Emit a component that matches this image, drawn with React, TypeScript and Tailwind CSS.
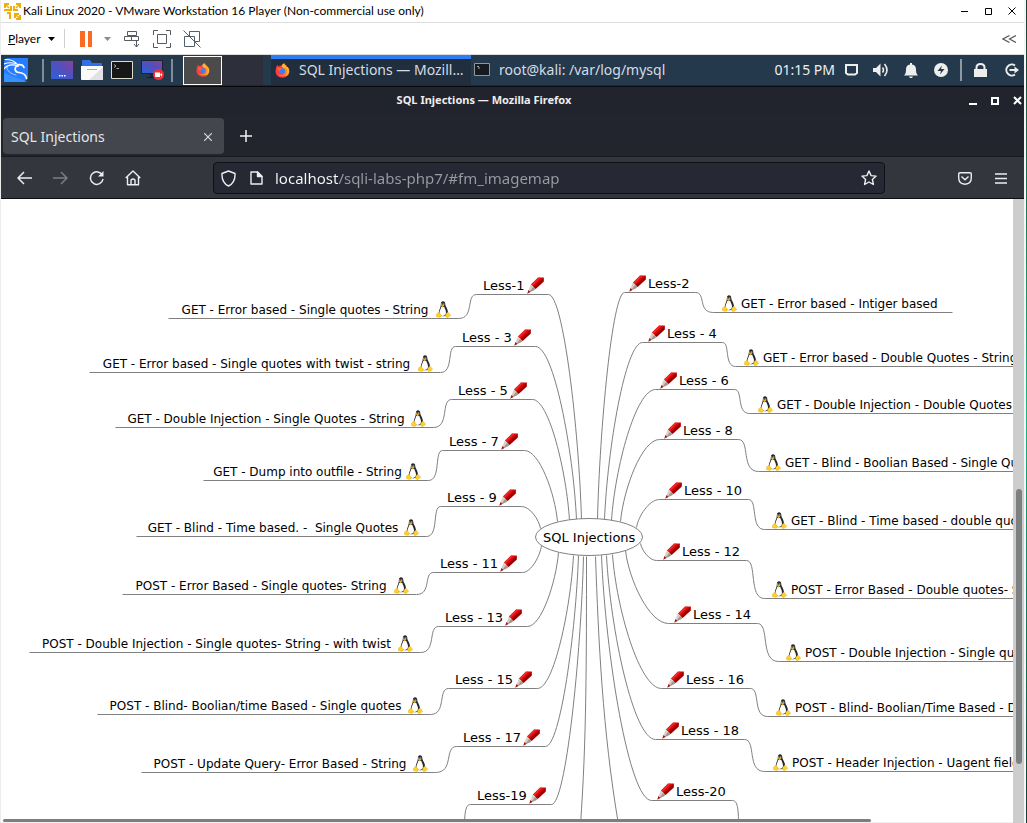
import React from "react";

type Side = "left" | "right";

interface Lesson {
  side: Side;
  label: string;
  x: number; // left edge of the label row
  y: number; // underline
  from: number; // underline start
  to: number; // underline end
  root: [number, number]; // where the branch meets the centre bubble
  topic?: { text: string; x: number; y: number; from: number; to: number };
}

const VIEW = { x: 1, y: 199 };

const lessons: Lesson[] = [
  { side: "left", label: "Less-1", x: 483, y: 294, from: 476, to: 548, root: [581, 519], topic: { text: "GET - Error based - Single quotes - String", x: 174, y: 318, from: 168, to: 458 } },
  { side: "left", label: "Less - 3", x: 462, y: 346, from: 455, to: 535, root: [576, 519], topic: { text: "GET - Error based - Single quotes with twist - string", x: 95, y: 372, from: 89, to: 440 } },
  { side: "left", label: "Less - 5", x: 458, y: 399, from: 451, to: 532, root: [569, 520], topic: { text: "GET - Double Injection - Single Quotes - String", x: 121, y: 427, from: 115, to: 433 } },
  { side: "left", label: "Less - 7", x: 449, y: 450, from: 442, to: 524, root: [557, 521], topic: { text: "GET - Dump into outfile - String", x: 209, y: 480, from: 203, to: 428 } },
  { side: "left", label: "Less - 9", x: 447, y: 506, from: 440, to: 521, root: [540, 528], topic: { text: "GET - Blind - Time based. -  Single Quotes", x: 142, y: 536, from: 136, to: 426 } },
  { side: "left", label: "Less - 11", x: 440, y: 572, from: 433, to: 522, root: [541, 545], topic: { text: "POST - Error Based - Single quotes- String", x: 128, y: 594, from: 122, to: 416 } },
  { side: "left", label: "Less - 13", x: 445, y: 626, from: 438, to: 527, root: [558, 552], topic: { text: "POST - Double Injection - Single quotes- String - with twist", x: 35, y: 652, from: 29, to: 420 } },
  { side: "left", label: "Less - 15", x: 455, y: 688, from: 448, to: 537, root: [573, 555], topic: { text: "POST - Blind- Boolian/time Based - Single quotes", x: 103, y: 714, from: 97, to: 430 } },
  { side: "left", label: "Less - 17", x: 463, y: 746, from: 456, to: 545, root: [578, 555], topic: { text: "POST - Update Query- Error Based - String", x: 147, y: 772, from: 141, to: 435 } },
  { side: "left", label: "Less-19", x: 477, y: 804, from: 470, to: 551, root: [583, 556] },
  { side: "right", label: "Less-2", x: 629, y: 292, from: 624, to: 695, root: [597, 519], topic: { text: "GET - Error based - Intiger based", x: 722, y: 312, from: 713, to: 952 } },
  { side: "right", label: "Less - 4", x: 648, y: 342, from: 642, to: 722, root: [604, 519], topic: { text: "GET - Error based - Double Quotes - String", x: 744, y: 366, from: 735, to: 1100 } },
  { side: "right", label: "Less - 6", x: 660, y: 389, from: 655, to: 734, root: [611, 520], topic: { text: "GET - Double Injection - Double Quotes - String", x: 758, y: 413, from: 749, to: 1100 } },
  { side: "right", label: "Less - 8", x: 664, y: 439, from: 659, to: 738, root: [620, 521], topic: { text: "GET - Blind - Boolian Based - Single Quotes", x: 766, y: 471, from: 758, to: 1100 } },
  { side: "right", label: "Less - 10", x: 665, y: 499, from: 659, to: 748, root: [636, 527], topic: { text: "GET - Blind - Time based - double quotes", x: 772, y: 529, from: 764, to: 1100 } },
  { side: "right", label: "Less - 12", x: 663, y: 560, from: 656, to: 746, root: [640, 543], topic: { text: "POST - Error Based - Double quotes- String", x: 772, y: 598, from: 764, to: 1100 } },
  { side: "right", label: "Less - 14", x: 674, y: 623, from: 668, to: 757, root: [625, 550], topic: { text: "POST - Double Injection - Single quotes", x: 786, y: 661, from: 778, to: 1100 } },
  { side: "right", label: "Less - 16", x: 667, y: 688, from: 661, to: 750, root: [612, 554], topic: { text: "POST - Blind- Boolian/Time Based - Double quotes", x: 776, y: 716, from: 767, to: 1100 } },
  { side: "right", label: "Less - 18", x: 662, y: 739, from: 655, to: 744, root: [606, 555], topic: { text: "POST - Header Injection - Uagent field", x: 773, y: 771, from: 764, to: 1100 } },
  { side: "right", label: "Less-20", x: 657, y: 800, from: 651, to: 732, root: [601, 555] },
];

function branchPath(l: Lesson) {
  const nx = l.side === "left" ? l.to : l.from;
  const [rx, ry] = l.root;
  const dx = rx - nx;
  const dy = l.y - ry;
  return `M${nx} ${l.y}C${nx + 0.45 * dx} ${l.y} ${rx - 0.08 * dx} ${ry + 0.4 * dy} ${rx} ${ry}`;
}

function linkPath(l: Lesson) {
  const x0 = l.side === "left" ? l.from : l.to;
  if (!l.topic) {
    const s = l.side === "left" ? -1 : 1;
    return `M${x0} ${l.y}C${x0 + 5 * s} ${l.y} ${x0 + 6 * s} ${l.y + 8} ${x0 + 6 * s} ${l.y + 24}`;
  }
  const x1 = l.side === "left" ? l.topic.to : l.topic.from;
  const dx = x1 - x0;
  return `M${x0} ${l.y}C${x0 + 0.6 * dx} ${l.y} ${x0 + 0.1 * dx} ${l.topic.y} ${x1} ${l.topic.y}`;
}

function Pencil() {
  return (
    <svg width="17" height="17" viewBox="0 0 17 17" className="shrink-0">
      <path d="M11 .4h5.600v4.200L8.500 12 3.900 7.600z" fill="#dc0808" />
      <path d="M16.600.6v4L8.500 12 6.600 10.200z" fill="#9d0000" />
      <path d="M11 .8h2.500L5.800 8.400 4.700 7.400z" fill="#f42a2a" />
      <path d="M3.900 7.600 8.500 12 7 13.200l-5.600 2.500-.4-1L3.200 9z" fill="#d8cec6" />
      <path d="M6 10 8.500 12 7 13.200l-5 2.300z" fill="#a3968d" />
      <path d="M1.500 13 3.400 15 .2 16.800z" fill="#a01010" />
    </svg>
  );
}

function Penguin() {
  return (
    <svg width="15" height="17" viewBox="0 0 15 17" className="shrink-0">
      <path d="M4.900 3C4.900 1.200 5.700.2 7 .2c1.500 0 2.300 1.100 2.300 3C9.300 5.500 12 7.500 12 11.500c0 2.500-2 3.700-4.800 3.700S2.700 14 2.700 12C2.700 9 4.900 6.500 4.900 3z" fill="#24272c" />
      <path d="M5.300 6h3c.6 2 1.700 3.300 1.700 5.600 0 2.300-1.200 3.300-3.200 3.300s-3.400-1-3.400-2.900c0-2.300 1.400-3.700 1.900-6z" fill="#fff" />
      <path d="M5.300 2.600h1v1.200h-1zM7.200 2.600h1.100v1.200H7.200z" fill="#e4e4e4" />
      <path d="M4.900 4.500 6.500 3.500l2 1L6.500 6.400z" fill="#e9ab1c" />
      <path d="M2.600 11.300c1 0 1.300 1.300 2.200 2.300.8.900.6 2.500-.7 2.700-1.400.2-2.500-.6-3.600-.8-.6-.3.200-1.300 0-2.200.1-.8 1.500-.6 2.100-2z" fill="#fdd02a" stroke="#dba512" strokeWidth=".4" />
      <path d="M11.800 11.300c.8 0 1 1.100 1.700 1.700.8.600 1.400 1.100 1 1.600-1.100.7-2 1.800-3.300 1.900-1.400 0-1.800-1.200-1.600-2.300.3-1.300.9-2.400 2.200-2.900z" fill="#fdd02a" stroke="#dba512" strokeWidth=".4" />
    </svg>
  );
}

function FirefoxLogo({ size }: { size: number }) {
  return (
    <svg width={size} height={size} viewBox="0 0 16 16" className="shrink-0">
      <path d="M1.700 3.400 2.600 2l1.500 1.600C5 2.900 6 2.700 7 2.900 7.400 1.700 8.700.7 10.100.3c-.1 1.500 1.200 1.900 2.200 2.900l.1 1.200.8-.3c1.300 1.300 2.100 3 2.100 5 0 3.700-3.200 6.500-7.200 6.500S.6 12.700.6 9c0-2.300.5-3.700 1.100-5.600z" fill="#ff3b45" />
      <path d="M10.100.3c-.1 1.500 1.200 1.900 2.200 2.900l.1 1.200.8-.3c1.300 1.300 2 3 1.900 5-.2 3-2.300 4.900-5 5.400 3-1.800 3-6.500-.2-8.500C8.300 4.900 7 3.800 7.100 2.900 7.500 1.700 8.700.7 10.100.3z" fill="#ffb52b" />
      <path d="M11.700 5.300c2 2.400 1.600 6.200-.9 8-2.600 1.500-5.800.8-7.500-1.600 1.800 1.400 5 1.600 6.600-.2 1.400-1.600 1.200-4.200.1-5.400z" fill="#ff8a1f" />
      <circle cx="7.800" cy="8.600" r="3" fill="#3f7df5" />
      <path d="M2.400 5.300c1.700-.7 3.500-.3 5.300.5L6.500 7.200c-1.100.1-1.700.8-1.400 1.900-1.200-.8-2.300-2.200-2.700-3.800z" fill="#ff6a2b" />
    </svg>
  );
}

function VmwareLogo() {
  return (
    <svg width="17" height="17" viewBox="0 0 17 17" fill="none" stroke="#f0ae0c" strokeWidth="2">
      <path d="M1 5V1h4M12 1h4v4M16 12v4h-4M6 16v-5" />
      <path d="M0 7h7V3M10 3v4h4M11 15v-4h4M3 10h4" />
      <path d="m1 1 4 4M16 1l-4 4M16 16l-4-4" strokeWidth="1.600" />
    </svg>
  );
}

function WindowFrame() {
  return (
    <header className="flex h-[23px] shrink-0 items-center border-b border-[#dedede] bg-white pl-[3px] pr-2">
      <VmwareLogo />
      <h1 className="ml-[2px] flex-1 whitespace-pre font-['Lato','Open_Sans',sans-serif] text-[12px] leading-4 text-black">
        Kali Linux 2020 - VMware Workstation 16 Player (Non-commercial use only)
      </h1>
      <div className="flex items-center gap-4">
        <button aria-label="Minimize">
          <svg width="8" height="8" stroke="#000" className="block"><path d="M1 4.500h7" /></svg>
        </button>
        <button aria-label="Maximize">
          <svg width="8" height="8" fill="none" stroke="#000" className="block"><path d="M1.500 1.500h6v6h-6z" /></svg>
        </button>
        <button aria-label="Close">
          <svg width="8" height="8" stroke="#000" className="block"><path d="m.5.500 7 7m0-7-7 7" /></svg>
        </button>
      </div>
    </header>
  );
}

function PlayerToolbar() {
  return (
    <div className="flex h-8 shrink-0 items-center border-b border-[#dcdcdc] bg-white pl-[7px] pr-2">
      <button className="flex items-center font-['Lato','Open_Sans',sans-serif] text-[12px] leading-4 text-black">
        <span><u>P</u>layer</span>
        <svg width="7" height="4" className="ml-[7px]"><path d="M0 0h7L3.500 4z" /></svg>
      </button>
      <span className="ml-[9px] h-[19px] w-px bg-[#cfcfcf]" />
      <button aria-label="Suspend" className="ml-[15px]">
        <svg width="13" height="16" fill="#fb6a22" className="block"><path d="M0 0h5v16H0zM8 0h4v16H8z" /></svg>
      </button>
      <button aria-label="Power options" className="ml-[11px]">
        <svg width="7" height="4" fill="#8a8a8a" className="block"><path d="M0 0h7L3.500 4z" /></svg>
      </button>
      <button aria-label="Send Ctrl+Alt+Del" className="ml-3">
        <svg width="18" height="18" fill="none" stroke="#555b61" className="block">
          <path d="M4.500 1.500h9v4h-9zM1.500 6.500h7v4h-7zM8.500 6.500h7v4h-7zM13.500 10v7M11 14l2.500 3 2.500-3" />
        </svg>
      </button>
      <button aria-label="Full screen" className="ml-3">
        <svg width="18" height="18" fill="none" stroke="#555b61" className="block">
          <path d="M.5 5V.500H5M13 .500h4.500V5M17.500 13v4.500H13M5 17.500H.500V13M4.500 4.500h9v9h-9z" />
        </svg>
      </button>
      <button aria-label="Unity" className="ml-3">
        <svg width="18" height="18" fill="none" stroke="#51606d" className="block">
          <path d="M6.500 6V1.500h10v10h-5M1.500 6.500h10v10h-10zM.500.500l17 17" />
        </svg>
      </button>
      <span className="flex-1" />
      <button aria-label="Collapse">
        <svg width="14" height="8" fill="none" stroke="#50585f" strokeWidth="1.200" className="block"><path d="M7.500.500 1 4l6.500 3.500M14 .500 7.500 4 14 7.500" /></svg>
      </button>
    </div>
  );
}

function Launchers() {
  return (
    <>
      <button aria-label="Applications" className="ml-[3px]">
        <svg width="24" height="24" viewBox="0 0 24 24" className="block">
          <path d="M3 0h21v20l-4 4H0V3z" fill="#277dff" />
          <path d="m0 15 24 9H0z" fill="#42a0ff" opacity=".6" />
          <g fill="none" stroke="#fff" strokeLinecap="round">
            <path d="M1 1.500c5 0 9 .5 12 4.500M0 6c5-2 10-1.500 15 1M0 11c3-4 8-5 14-3" strokeWidth="1.200" />
            <path d="M14 6.500c3 0 5 0 6 3M14 8c-4 0-4 6 1 6.500 5 .5 7 2.500 7.500 6" strokeWidth="1.700" />
            <path d="M3 9c-.5 4 4 7 9 8" strokeWidth=".6" />
          </g>
        </svg>
      </button>
      <span className="ml-[14px] h-[23px] w-[2px] bg-[#7f8c99]" />
      <button aria-label="Show desktop" className="ml-[7px]">
        <svg width="22" height="18" className="block">
          <defs>
            <linearGradient id="desk" x1="0" x2="1" y1="1" y2="0">
              <stop offset="0" stopColor="#2a62d8" /><stop offset=".6" stopColor="#574dba" /><stop offset="1" stopColor="#8d419c" />
            </linearGradient>
          </defs>
          <path d="M0 0h22v18H0z" fill="url(#desk)" />
          <path d="M8 14h1.500v1.500H8zM10.500 14H12v1.500h-1.500zM13 14h1.500v1.500H13z" fill="#fff" />
        </svg>
      </button>
      <button aria-label="Files" className="ml-2">
        <svg width="22" height="20" className="block">
          <path d="M1 1Q1 0 2 0h7l2 3h9q1 0 1 1v6H1z" fill="#2d72e8" />
          <path d="M0 6h22v13q0 1-1 1H1q-1 0-1-1z" fill="#fafafa" />
          <path d="m22 7-14 13h13q1 0 1-1z" fill="#e2e2e4" />
          <path d="M6 9.500h10" stroke="#aaa" />
        </svg>
      </button>
      <button aria-label="Terminal" className="ml-2">
        <svg width="22" height="18" className="block">
          <path d="M.5.500h21v17H.500z" fill="#171717" stroke="#dedbd2" />
          <path d="M3 3.500 5 5 3 6.500M5.500 7.500H8" fill="none" stroke="#aaa" />
        </svg>
      </button>
      <button aria-label="Recorder" className="ml-2">
        <svg width="24" height="20" className="block">
          <path d="M0 0h22v14H0z" fill="#1d2230" />
          <path d="M1 1h20v12H1z" fill="url(#desk)" />
          <path d="M9 14h5v3H9z" fill="#1b2736" />
          <path d="M6 17h10v1H6z" fill="#111923" />
          <circle cx="17.500" cy="14.500" r="5.500" fill="#f02e35" />
          <path d="M14 12.500h5V17h-5zM19 14.500l2-1.500v3.500z" fill="#fff" />
        </svg>
      </button>
      <span className="ml-[6px] h-[23px] w-[2px] bg-[#7f8c99]" />
      <button aria-label="Workspace 1" className="ml-[10px] flex h-[29px] w-[39px] items-center justify-center border border-white bg-[#4b4b4b]">
        <FirefoxLogo size={14} />
      </button>
      <span className="h-full w-[41px] bg-[#2d2f3b]" />
    </>
  );
}

function KaliPanel() {
  return (
    <div className="flex h-[31px] shrink-0 items-center border-b border-[#1b2938] bg-[#25394d] pr-[5px] font-['Noto_Sans',sans-serif] text-sm text-[#d5dce4]">
      <Launchers />
      <button className="ml-2 flex h-full w-[200px] items-center gap-[9px] border-t-4 border-[#2c7df6] bg-[#202e3d] pb-1 pl-1">
        <FirefoxLogo size={15} />
        <span className="whitespace-nowrap">SQL Injections — Mozill…</span>
      </button>
      <button className="flex h-full items-center gap-[9px] pb-px pl-[3px]">
        <svg width="16" height="13"><path d="M.5.500h15v12H.500z" fill="#151b20" stroke="#8f979d" /><path d="M3 3.500h2M4 5h2" stroke="#aaa" /></svg>
        <span className="whitespace-nowrap">root@kali: /var/log/mysql</span>
      </button>
      <span className="flex-1" />
      <time className="whitespace-nowrap pb-px text-[#eee]">01:15 PM</time>
      <div className="ml-2 flex items-center text-[#eeeeec]">
        <svg width="16" height="12" fill="none" stroke="currentColor" strokeWidth="2"><path d="M3 1h11v8l-2 1.500H5L3 9z" /></svg>
        <svg width="16" height="14" fill="currentColor" className="ml-[14px]">
          <path d="M0 5h3l4.500-4.500v13L3 9H0z" /><path d="M9.500 4.500q2 2.500 0 5M11.500 1q5 6 0 12" fill="none" stroke="currentColor" strokeWidth="1.600" />
        </svg>
        <svg width="14" height="15" fill="currentColor" className="ml-[15px]">
          <path d="M0 12.500Q2 11 2 6.500 2 2 6 1.500V0h2v1.500Q12 2 12 6.500q0 4.500 2 6zM5 13.500h4L8 15H6z" />
        </svg>
        <svg width="14" height="14" className="ml-4"><circle cx="7" cy="7" r="7" fill="currentColor" /><path d="M8 2.500 3.500 8H7l-1 3.500L10.500 6H7z" fill="#25394d" /></svg>
        <span className="ml-3 h-[22px] w-[2px] bg-[#8c98a3]" />
        <svg width="13" height="14" fill="currentColor" className="ml-3"><path d="M0 6h13v8H0z" /><path d="M2.500 6V4.500q0-3.500 4-3.500t4 3.500V6" fill="none" stroke="currentColor" strokeWidth="2" /></svg>
        <svg width="15" height="14" fill="none" stroke="currentColor" strokeWidth="2" className="ml-[17px]">
          <path d="M11 2.500A5.500 5.500 0 1 0 11 11.500M5.500 7H12" /><path d="m10.500 3.500 4.500 3.500-4.500 3.500z" fill="currentColor" stroke="none" />
        </svg>
      </div>
    </div>
  );
}

function FirefoxTitle() {
  return (
    <div className="flex h-[29px] shrink-0 items-center border-t border-[#08090c] bg-[#21242d] pb-[2px] pr-[2px]">
      <span className="w-16" />
      <h2 className="flex-1 pr-[66px] text-center font-['Noto_Sans',sans-serif] text-[11px] font-bold leading-4 text-[#eee]">
        SQL Injections — Mozilla Firefox
      </h2>
      <div className="flex items-center gap-[13px]">
        <button aria-label="Minimize Firefox"><svg width="9" height="9" className="block"><path d="M0 7h8v2H0z" fill="#fff" /></svg></button>
        <button aria-label="Maximize Firefox"><svg width="9" height="9" className="block"><path d="M1 2h6v6H1z" fill="none" stroke="#fff" strokeWidth="2" /></svg></button>
        <button aria-label="Close Firefox"><svg width="9" height="9" className="block"><path d="m1 1 7 7m0-7L1 8" stroke="#fff" strokeWidth="2" /></svg></button>
      </div>
    </div>
  );
}

function TabStrip() {
  return (
    <div className="flex h-[42px] shrink-0 items-center border-b border-[#181a20] bg-[#22252d] pl-[2px] font-['Noto_Sans',sans-serif]">
      <div className="flex h-9 w-[221px] items-center justify-between rounded bg-[#43464d] pl-2 pr-3 pt-[2px] text-sm text-[#e4e5e7]">
        <button>SQL Injections</button>
        <button aria-label="Close tab"><svg width="8" height="8" stroke="#d8d9db" strokeWidth="1.200" className="block"><path d="m0 0 8 8m0-8L0 8" /></svg></button>
      </div>
      <button aria-label="New tab" className="ml-4"><svg width="12" height="12" stroke="#f3f3f4" strokeWidth="1.500" className="block"><path d="M6 0v12M0 6h12" /></svg></button>
    </div>
  );
}

function NavBar() {
  return (
    <nav className="flex h-[42px] shrink-0 items-center border-b border-[#0d0e11] bg-[#33363c] pl-4 pr-[17px] pt-px text-[#eeeef0]">
      <button aria-label="Back">
        <svg width="15" height="14" fill="none" stroke="currentColor" strokeWidth="1.500" className="block"><path d="M7 1 1 7l6 6M1 7h14" /></svg>
      </button>
      <button aria-label="Forward" disabled className="ml-[21px] text-[#7c7e82]">
        <svg width="15" height="14" fill="none" stroke="currentColor" strokeWidth="1.500" className="block"><path d="m8 1 6 6-6 6M14 7H0" /></svg>
      </button>
      <button aria-label="Reload" className="ml-[21px]">
        <svg width="16" height="16" fill="none" stroke="currentColor" strokeWidth="1.500" className="block"><path d="M13.500 5.500A6.300 6.300 0 1 0 14 9" /><path d="M14.500 1v5.500H9z" fill="currentColor" stroke="none" /></svg>
      </button>
      <button aria-label="Home" className="ml-5">
        <svg width="16" height="16" fill="none" stroke="currentColor" strokeWidth="1.400" strokeLinejoin="round" className="block"><path d="M.7 8 8 1l7.300 7M2.500 6.500v8.200h11V6.500M6 14.500V10q2-2 4 0v4.500" /></svg>
      </button>
      <div className="ml-[72px] flex h-8 min-w-0 flex-1 items-center rounded border border-[#101116] bg-[#262833] pl-[7px] pr-[7px]">
        <svg width="15" height="17" fill="none" stroke="currentColor" strokeWidth="1.400" strokeLinejoin="round"><path d="M7.500 1 14 3.500q.5 9-6.500 12.500Q.500 12.500 1 3.500z" /></svg>
        <svg width="13" height="14" fill="none" stroke="currentColor" strokeWidth="1.400" strokeLinejoin="round" className="ml-[14px]"><path d="M1 1h6.500L12 5.500V13H1z" /><path d="M7.500 1v4.500H12z" fill="currentColor" /></svg>
        <input
          aria-label="Address"
          defaultValue="localhost/sqli-labs-php7/#fm_imagemap"
          className="ml-3 min-w-0 flex-1 bg-[linear-gradient(90deg,#fbfbfe_63px,#9a9ba3_63px)] bg-clip-text font-['Noto_Sans',sans-serif] text-[15px] leading-5 text-transparent outline-none"
        />
        <button aria-label="Bookmark this page">
          <svg width="16" height="16" fill="none" stroke="currentColor" strokeWidth="1.400" strokeLinejoin="round" className="block"><path d="m8 1 2.100 4.600 5 .5-3.700 3.400 1 5L8 12l-4.400 2.500 1-5L.900 6.100l5-.5z" /></svg>
        </button>
      </div>
      <button aria-label="Pocket" className="ml-[73px]">
        <svg width="14" height="13" fill="none" stroke="currentColor" strokeWidth="1.400" className="block"><path d="M2 .7h10q1.300 0 1.300 1.300v3.500q0 6.500-6.300 6.700Q.7 12 .7 5.500V2Q.7.700 2 .700zM3.500 4.500 7 7.700l3.500-3.200" /></svg>
      </button>
      <button aria-label="Menu" className="ml-[23px]">
        <svg width="12" height="11" stroke="currentColor" strokeWidth="1.300" className="block"><path d="M0 1h12M0 5.500h12M0 10h12" /></svg>
      </button>
    </nav>
  );
}

function TopicLink({ side, topic }: { side: Side; topic: NonNullable<Lesson["topic"]> }) {
  const top = topic.y - 17 - VIEW.y;
  if (side === "right") {
    return (
      <a href="#topic" className="absolute flex items-start gap-1 whitespace-pre text-[12px] leading-[17px]" style={{ left: topic.x - VIEW.x, top }}>
        <Penguin />
        <span className="pt-px">{topic.text}</span>
      </a>
    );
  }
  return (
    <a
      href="#topic"
      className="absolute flex items-start whitespace-pre text-[12px] leading-[17px]"
      style={{ left: topic.x - VIEW.x, top, width: topic.to - topic.x - 7 }}
    >
      <span className="flex-1 pt-px text-center">{topic.text}</span>
      <Penguin />
    </a>
  );
}

function MindMap() {
  return (
    <main className="relative min-w-0 flex-1 overflow-hidden bg-white font-['DejaVu_Sans',sans-serif] text-[13px] leading-[17px] text-black">
      <svg className="absolute left-0 top-0 h-full w-full" fill="none" stroke="#808080">
        <g transform={`translate(${0.5 - VIEW.x} ${0.5 - VIEW.y})`}>
          {lessons.map((l) => (
            <g key={l.label}>
              <path d={branchPath(l)} />
              <path d={`M${l.from} ${l.y}H${l.to}`} />
              <path d={linkPath(l)} />
              {l.topic && <path d={`M${l.topic.from} ${l.topic.y}H${l.topic.to}`} />}
            </g>
          ))}
          <path d="M586 556C586 660 586 740 580 824M595 556C598 640 602 730 618 824" />
          <ellipse cx="588.500" cy="536.500" rx="53.500" ry="18.500" fill="#fff" />
        </g>
      </svg>
      <a href="#root" className="absolute whitespace-pre" style={{ left: 543 - VIEW.x, top: 529 - VIEW.y }}>SQL Injections</a>
      {lessons.map((l) => (
        <React.Fragment key={l.label}>
          <a
            href="#lesson"
            className={l.side === "left" ? "absolute flex items-center gap-[2px] whitespace-pre" : "absolute flex flex-row-reverse items-center gap-[2px] whitespace-pre"}
            style={{ left: l.x - VIEW.x, top: l.y - 17 - VIEW.y }}
          >
            <span>{l.label}</span>
            <Pencil />
          </a>
          {l.topic && <TopicLink side={l.side} topic={l.topic} />}
        </React.Fragment>
      ))}
      <div className="absolute bottom-px left-[2px] right-[142px] h-[3px] rounded-full bg-[#7b7f7e]" />
      <div className="absolute bottom-0 left-0 right-0 h-px bg-[#efefef]" />
    </main>
  );
}

export default function App() {
  return (
    <div className="flex h-screen overflow-hidden border-l border-[#ececec] bg-white">
      <div className="flex min-w-0 flex-1 flex-col">
        <WindowFrame />
        <PlayerToolbar />
        <KaliPanel />
        <FirefoxTitle />
        <TabStrip />
        <NavBar />
        <div className="flex min-h-0 flex-1">
          <MindMap />
          <div className="flex w-[11px] shrink-0 flex-col items-center bg-[#cdcdcd]">
            <span className="flex-[290]" />
            <span className="w-[6px] flex-[275] rounded-full bg-[#7c8080]" />
            <span className="flex-[59]" />
          </div>
        </div>
      </div>
      <div className="w-[2px] shrink-0 bg-[#f5f5f5]" />
      <div className="w-px shrink-0 bg-linear-to-b from-[#173f33] via-[#10b981] to-[#0d3f38]" />
    </div>
  );
}
